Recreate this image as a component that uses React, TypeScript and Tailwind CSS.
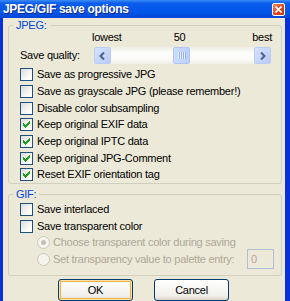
const checkPixels = [
  [6, 0], [5, 1], [6, 1], [0, 2], [4, 2], [5, 2], [6, 2],
  [0, 3], [1, 3], [3, 3], [4, 3], [5, 3], [0, 4], [1, 4], [2, 4], [3, 4], [4, 4],
  [1, 5], [2, 5], [3, 5], [2, 6],
];

const CheckBox = ({ checked }: { checked?: boolean }) => (
  <div className="w-[13px] h-[13px] shrink-0 border border-[#1c5180] bg-[linear-gradient(135deg,#dcdcd7,#ffffff_80%)] flex items-center justify-center">
    {checked && (
      <svg width="7" height="7" viewBox="0 0 7 7" shapeRendering="crispEdges">
        {checkPixels.map(([x, y]) => (
          <rect key={`${x}-${y}`} x={x} y={y} width="1" height="1" fill="#21a121" />
        ))}
      </svg>
    )}
  </div>
);

const CheckRow = ({ label, checked, h }: { label: string; checked?: boolean; h: string }) => (
  <div className={`flex items-start pt-[2px] pl-[11px] gap-[4px] ${h}`}>
    <CheckBox checked={checked} />
    <span className="leading-[13px] whitespace-nowrap">{label}</span>
  </div>
);

const Radio = ({ dot }: { dot?: boolean }) => (
  <div className="w-[13px] h-[13px] shrink-0 rounded-full border border-[#cac8bb] bg-[#f4f3ee] flex items-center justify-center">
    {dot && <div className="w-[5px] h-[5px] rounded-full bg-[#c2c0b2]" />}
  </div>
);

const ArrowButton = ({ dir }: { dir: "left" | "right" }) => (
  <div className="w-[17px] h-[17px] shrink-0 rounded-[2px] border border-[#b9cdf6] bg-[linear-gradient(135deg,#d6e2fe,#b9cbf9)] flex items-center justify-center">
    <svg width="7" height="8" viewBox="0 0 7 8">
      <path
        d={dir === "left" ? "M5 0.5 L1.5 4 L5 7.5" : "M2 0.5 L5.5 4 L2 7.5"}
        fill="none"
        stroke="#4d6185"
        strokeWidth="2"
      />
    </svg>
  </div>
);

const Legend = ({ children }: { children: string }) => (
  <legend className="ml-[4px] px-[3px] leading-[13px] text-[#0046d5]">{children}</legend>
);

export default function App() {
  return (
    <div className="w-[290px] h-[301px] flex flex-col overflow-hidden bg-[#0831d9] font-['Liberation_Sans',Arial,sans-serif] text-[11px] tracking-[-0.25px] text-black">
      <div className="h-[18px] shrink-0 flex items-center pl-[3px] pr-[5px] bg-[linear-gradient(180deg,#3d8cf7_0%,#0a5ded_18%,#0156e8_70%,#0045d4_100%)]">
        <span className="text-white font-bold text-[12px] tracking-[-0.3px] leading-[14px] [text-shadow:1px_1px_#0f2a8a]">
          JPEG/GIF save options
        </span>
        <div className="ml-auto w-[13px] h-[13px] rounded-[2px] border border-white bg-[linear-gradient(135deg,#e98b6c,#d6431c_60%,#c13714)] flex items-center justify-center">
          <svg width="7" height="7" viewBox="0 0 7 7">
            <path d="M0.5 0.5 L6.5 6.5 M6.5 0.5 L0.5 6.5" stroke="white" strokeWidth="1.6" />
          </svg>
        </div>
      </div>

      <div className="flex-1 ml-[3px] mr-[5px] bg-[#ece9d8] flex flex-col">
        <fieldset className="mt-[1px] ml-[5px] w-[274px] border border-[#d0d0bf] rounded-[3px] pb-[1px]">
          <Legend>JPEG:</Legend>
          <div className="flex h-[13px] leading-[13px] -mt-[1px] pl-[83px]">
            <span>lowest</span>
            <span className="ml-[52px]">50</span>
            <span className="ml-auto mr-[9px]">best</span>
          </div>
          <div className="flex items-center mt-[3px] pl-[11px]">
            <span className="w-[74px]">Save quality:</span>
            <div className="w-[177px] h-[17px] flex">
              <ArrowButton dir="left" />
              <div className="flex-1 bg-[linear-gradient(180deg,#eeede5,#fdfdfb_35%,#fbfbf8_70%,#efeee7)]">
                <div className="ml-[62px] w-[17px] h-[17px] rounded-[2px] border border-[#b1c6f6] bg-[linear-gradient(90deg,#cddbfe,#bccffd)] flex items-center justify-center">
                  {[0, 1, 2, 3].map((i) => (
                    <div key={i} className="flex">
                      <div className="w-[1px] h-[7px] bg-[#eef4fe]" />
                      <div className="w-[1px] h-[7px] bg-[#8cb0f8]" />
                    </div>
                  ))}
                </div>
              </div>
              <ArrowButton dir="right" />
            </div>
          </div>
          <div className="mt-[2px]">
            <CheckRow h="h-[17px]" label="Save as progressive JPG" />
            <CheckRow h="h-[17px]" label="Save as grayscale JPG (please remember!)" />
            <CheckRow h="h-[16px]" label="Disable color subsampling" />
            <CheckRow h="h-[17px]" label="Keep original EXIF data" checked />
            <CheckRow h="h-[17px]" label="Keep original IPTC data" checked />
            <CheckRow h="h-[16px]" label="Keep original JPG-Comment" checked />
            <CheckRow h="h-[16px]" label="Reset EXIF orientation tag" checked />
          </div>
        </fieldset>

        <fieldset className="mt-[4px] ml-[5px] w-[274px] border border-[#d0d0bf] rounded-[3px] pb-[6px]">
          <Legend>GIF:</Legend>
          <CheckRow h="h-[17px]" label="Save interlaced" />
          <CheckRow h="h-[17px]" label="Save transparent color" />
          <div className="h-[14px] flex items-center pl-[28px] gap-[3px] text-[#aca899] whitespace-nowrap">
            <Radio dot />
            <span>Choose transparent color during saving</span>
          </div>
          <div className="h-[20px] flex items-center pl-[28px] gap-[3px] text-[#aca899] whitespace-nowrap">
            <Radio />
            <span>Set transparency value to palette entry:</span>
            <div className="ml-auto mr-[7px] w-[27px] h-[20px] shrink-0 border border-[#afc0d6] pl-[3px] leading-[18px]">0</div>
          </div>
        </fieldset>

        <div className="mt-[3px] flex gap-[21px] pl-[55px]">
          <button className="w-[75px] h-[22px] rounded-[3px] border border-[#003c74] bg-[linear-gradient(180deg,#ffffff,#f0efea_80%,#d8d2c6)] shadow-[inset_0_0_0_1px_#ffe3a6,inset_0_0_0_2px_#f0b247] leading-[20px]">
            OK
          </button>
          <button className="w-[75px] h-[22px] rounded-[3px] border border-[#003c74] bg-[linear-gradient(180deg,#ffffff,#f0efea_80%,#d8d2c6)] leading-[20px]">
            Cancel
          </button>
        </div>
      </div>
    </div>
  );
}
